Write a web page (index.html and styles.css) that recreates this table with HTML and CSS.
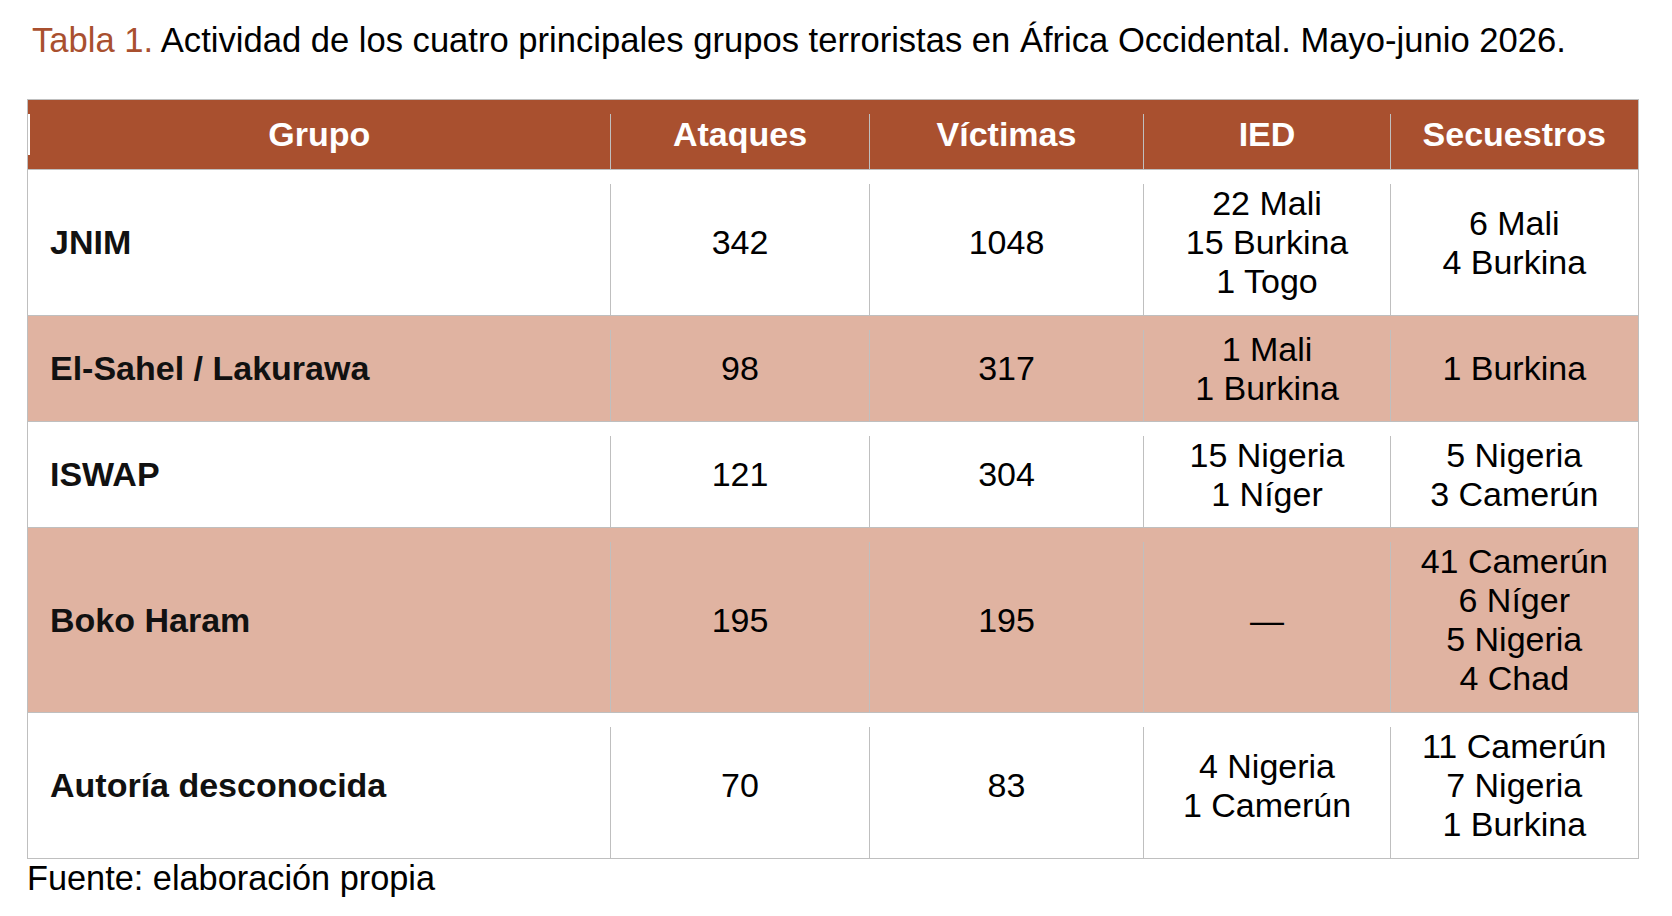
FILE: index.html
```html
<!DOCTYPE html>
<html lang="es">
<head>
<meta charset="utf-8">
<title>Tabla 1</title>
<link rel="stylesheet" href="styles.css">
</head>
<body>
<div class="page">
  <p class="caption"><span class="caption-label">Tabla 1.</span> Actividad de los cuatro principales grupos terroristas en África Occidental. Mayo-junio 2026.</p>
  <table class="data">
    <colgroup>
      <col class="c1"><col class="c2"><col class="c3"><col class="c4"><col class="c5">
    </colgroup>
    <thead>
      <tr>
        <th>Grupo</th><th>Ataques</th><th>Víctimas</th><th>IED</th><th>Secuestros</th>
      </tr>
    </thead>
    <tbody>
      <tr>
        <td class="group">JNIM</td><td>342</td><td>1048</td>
        <td>22 Mali<br>15 Burkina<br>1 Togo</td>
        <td>6 Mali<br>4 Burkina</td>
      </tr>
      <tr class="alt two">
        <td class="group">El-Sahel / Lakurawa</td><td>98</td><td>317</td>
        <td>1 Mali<br>1 Burkina</td>
        <td>1 Burkina</td>
      </tr>
      <tr class="two">
        <td class="group">ISWAP</td><td>121</td><td>304</td>
        <td>15 Nigeria<br>1 Níger</td>
        <td>5 Nigeria<br>3 Camerún</td>
      </tr>
      <tr class="alt">
        <td class="group">Boko Haram</td><td>195</td><td>195</td>
        <td>—</td>
        <td>41 Camerún<br>6 Níger<br>5 Nigeria<br>4 Chad</td>
      </tr>
      <tr>
        <td class="group">Autoría desconocida</td><td>70</td><td>83</td>
        <td>4 Nigeria<br>1 Camerún</td>
        <td>11 Camerún<br>7 Nigeria<br>1 Burkina</td>
      </tr>
    </tbody>
  </table>
  <p class="source">Fuente: elaboración propia</p>
</div>
</body>
</html>
```
FILE: styles.css
```css
html, body {
  margin: 0;
  padding: 0;
  background: #ffffff;
}
body {
  font-family: "Liberation Sans", Arial, sans-serif;
  color: #000000;
}
.page {
  padding: 20px 34px 0 27px;
}
.caption {
  margin: 0 0 39px 5px;
  font-size: 34.6px;
  line-height: 40px;
  white-space: nowrap;
}
.caption-label {
  color: #a9502f;
}
.data {
  width: 1611px;
  table-layout: fixed;
  border-collapse: collapse;
  border: 1px solid #bfbfbf;
  font-size: 34px;
  line-height: 39px;
}
.c1 { width: 583px; }
.c2 { width: 259px; }
.c3 { width: 274px; }
.c4 { width: 247px; }
.c5 { width: 248px; }
.data th,
.data td {
  position: relative;
  padding: 14px 20px;
  text-align: center;
  vertical-align: middle;
  border-top: 1px solid #bfbfbf;
  border-bottom: 1px solid #bfbfbf;
}
.data tr.two td {
  padding-top: 13.5px;
  padding-bottom: 13.5px;
}
.data th {
  padding: 15px 20px;
  background: #a9502f;
  color: #ffffff;
  font-weight: bold;
}
.data th + th::before,
.data td + td::before {
  content: "";
  position: absolute;
  left: -1px;
  top: 14px;
  bottom: 0;
  width: 1px;
  background: #bfbfbf;
}
.data th:first-child::before {
  content: "";
  position: absolute;
  left: 0;
  top: 14px;
  bottom: 14px;
  width: 2px;
  background: #ffffff;
}
.data td.group {
  padding-left: 22px;
  text-align: left;
  font-weight: bold;
  color: #111111;
}
.data tr.alt td {
  background: #e0b3a1;
}
.source {
  margin: 0;
  font-size: 34.3px;
  line-height: 39px;
  color: #000000;
}
```
